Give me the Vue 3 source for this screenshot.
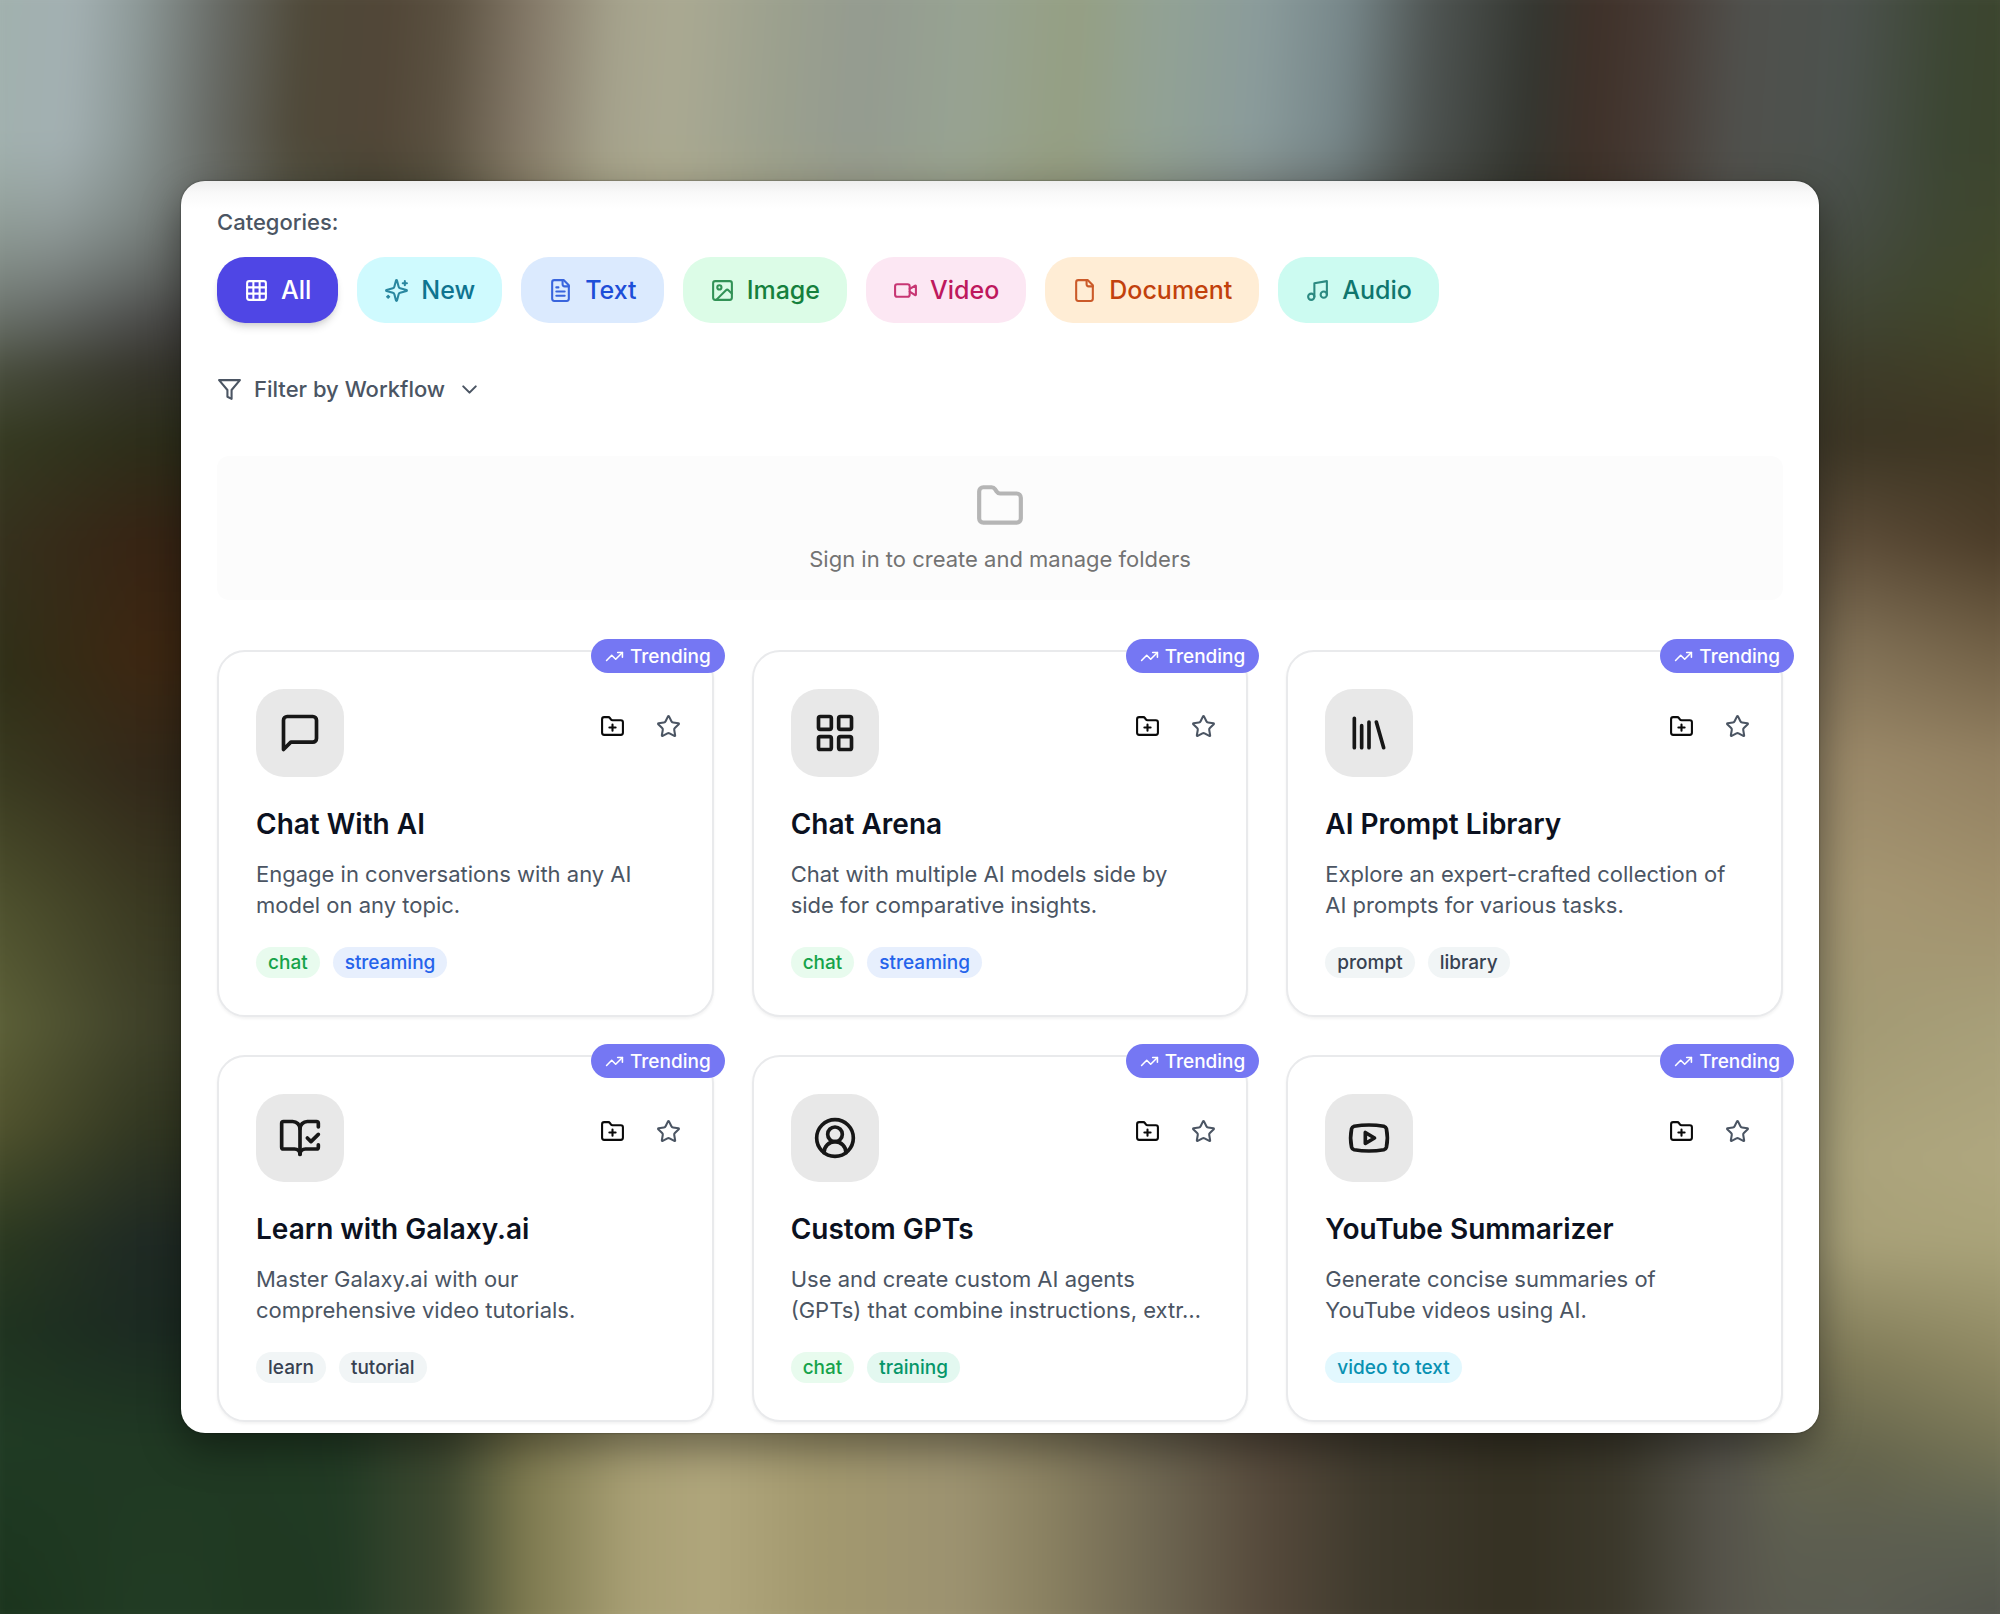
<script setup>
import { ref } from 'vue'

const icons = {
  grid: '<rect width="18" height="18" x="3" y="3" rx="2"/><path d="M3 9h18M3 15h18M9 3v18M15 3v18"/>',
  sparkles: '<path d="M9.937 15.5A2 2 0 0 0 8.5 14.063l-6.135-1.582a.5.5 0 0 1 0-.962L8.5 9.936A2 2 0 0 0 9.937 8.5l1.582-6.135a.5.5 0 0 1 .963 0L14.063 8.5A2 2 0 0 0 15.5 9.937l6.135 1.581a.5.5 0 0 1 0 .964L15.5 14.063a2 2 0 0 0-1.437 1.437l-1.582 6.135a.5.5 0 0 1-.963 0z"/><path d="M20 3v4M22 5h-4M4 17v2M5 18H3"/>',
  text: '<path d="M15 2H6a2 2 0 0 0-2 2v16a2 2 0 0 0 2 2h12a2 2 0 0 0 2-2V7Z"/><path d="M14 2v4a2 2 0 0 0 2 2h4M10 9H8M16 13H8M16 17H8"/>',
  image: '<rect width="18" height="18" x="3" y="3" rx="2"/><circle cx="9" cy="9" r="2"/><path d="m21 15-3.086-3.086a2 2 0 0 0-2.828 0L6 21"/>',
  video: '<path d="m16 13 5.223 3.482a.5.5 0 0 0 .777-.416V7.87a.5.5 0 0 0-.752-.432L16 10.5"/><rect x="2" y="6" width="14" height="12" rx="2"/>',
  file: '<path d="M15 2H6a2 2 0 0 0-2 2v16a2 2 0 0 0 2 2h12a2 2 0 0 0 2-2V7Z"/><path d="M14 2v4a2 2 0 0 0 2 2h4"/>',
  music: '<path d="M9 18V5l12-2v13"/><circle cx="6" cy="18" r="3"/><circle cx="18" cy="16" r="3"/>',
  funnel: '<path d="M22 3H2l8 9.46V19l4 2v-8.54z"/>',
  chevron: '<path d="m6 9 6 6 6-6"/>',
  folder: '<path d="M20 20a2 2 0 0 0 2-2V8a2 2 0 0 0-2-2h-7.9a2 2 0 0 1-1.69-.9L9.6 3.9A2 2 0 0 0 7.93 3H4a2 2 0 0 0-2 2v13a2 2 0 0 0 2 2Z"/>',
  folderPlus: '<path d="M12 10v6M9 13h6"/><path d="M20 20a2 2 0 0 0 2-2V8a2 2 0 0 0-2-2h-7.9a2 2 0 0 1-1.69-.9L9.6 3.9A2 2 0 0 0 7.93 3H4a2 2 0 0 0-2 2v13a2 2 0 0 0 2 2Z"/>',
  star: '<path d="M11.525 2.295a.53.53 0 0 1 .95 0l2.31 4.679a2.123 2.123 0 0 0 1.595 1.16l5.166.756a.53.53 0 0 1 .294.904l-3.736 3.638a2.123 2.123 0 0 0-.611 1.878l.882 5.14a.53.53 0 0 1-.771.56l-4.618-2.428a2.122 2.122 0 0 0-1.973 0L6.396 21.01a.53.53 0 0 1-.77-.56l.881-5.139a2.122 2.122 0 0 0-.611-1.879L2.16 9.795a.53.53 0 0 1 .294-.906l5.165-.755a2.122 2.122 0 0 0 1.597-1.16z"/>',
  trending: '<path d="m22 7-8.5 8.5-5-5L2 17"/><path d="M16 7h6v6"/>',
  message: '<path d="M21 15a2 2 0 0 1-2 2H7l-4 4V5a2 2 0 0 1 2-2h14a2 2 0 0 1 2 2z"/>',
  layout: '<rect width="7" height="7" x="3" y="3" rx="1"/><rect width="7" height="7" x="14" y="3" rx="1"/><rect width="7" height="7" x="14" y="14" rx="1"/><rect width="7" height="7" x="3" y="14" rx="1"/>',
  library: '<path d="m16 6 4 14M12 6v14M8 8v12M4 4v16"/>',
  bookCheck: '<path d="M12 21V7M16 12l2 2 4-4"/><path d="M22 6V4a1 1 0 0 0-1-1h-5a4 4 0 0 0-4 4 4 4 0 0 0-4-4H3a1 1 0 0 0-1 1v13a1 1 0 0 0 1 1h6a3 3 0 0 1 3 3 3 3 0 0 1 3-3h6a1 1 0 0 0 1-1v-1.3"/>',
  user: '<path d="M18 20a6 6 0 0 0-12 0"/><circle cx="12" cy="10" r="4"/><circle cx="12" cy="12" r="10"/>',
  youtube: '<path d="M2.5 17a24.12 24.12 0 0 1 0-10 2 2 0 0 1 1.4-1.4 49.56 49.56 0 0 1 16.2 0A2 2 0 0 1 21.5 7a24.12 24.12 0 0 1 0 10 2 2 0 0 1-1.4 1.4 49.55 49.55 0 0 1-16.2 0A2 2 0 0 1 2.5 17"/><path d="m10 15 5-3-5-3z"/>',
}

const categories = [
  { name: 'All', icon: 'grid' },
  { name: 'New', icon: 'sparkles' },
  { name: 'Text', icon: 'text' },
  { name: 'Image', icon: 'image' },
  { name: 'Video', icon: 'video' },
  { name: 'Document', icon: 'file' },
  { name: 'Audio', icon: 'music' },
]
const active = ref('All')

const tools = [
  { title: 'Chat With AI', icon: 'message', text: 'Engage in conversations with any AI model on any topic.', tags: [['chat', 'green'], ['streaming', 'blue']] },
  { title: 'Chat Arena', icon: 'layout', text: 'Chat with multiple AI models side by side for comparative insights.', tags: [['chat', 'green'], ['streaming', 'blue']] },
  { title: 'AI Prompt Library', icon: 'library', text: 'Explore an expert-crafted collection of AI prompts for various tasks.', tags: [['prompt', 'gray'], ['library', 'gray']] },
  { title: 'Learn with Galaxy.ai', icon: 'bookCheck', text: 'Master Galaxy.ai with our comprehensive video tutorials.', tags: [['learn', 'gray'], ['tutorial', 'gray']] },
  { title: 'Custom GPTs', icon: 'user', text: 'Use and create custom AI agents (GPTs) that combine instructions, extr…', tags: [['chat', 'green'], ['training', 'emerald']] },
  { title: 'YouTube Summarizer', icon: 'youtube', text: 'Generate concise summaries of YouTube videos using AI.', tags: [['video to text', 'cyan']] },
]
</script>

<template>
  <div class="page">
    <div class="backdrop" aria-hidden="true">
      <div class="wash bottom"></div>
      <div class="wash left"></div>
      <div class="wash left-inner"></div>
      <div class="wash right"></div>
      <div class="wash right-inner"></div>
      <div class="wash top"></div>
    </div>

    <main class="panel">
      <section class="categories">
        <h2 class="label">Categories:</h2>
        <div class="pills">
          <button
            v-for="c in categories"
            :key="c.name"
            type="button"
            class="pill"
            :class="[c.name.toLowerCase(), { active: active === c.name }]"
            @click="active = c.name"
          >
            <svg class="icon" viewBox="0 0 24 24" v-html="icons[c.icon]"></svg>
            <span>{{ c.name }}</span>
          </button>
        </div>
      </section>

      <button type="button" class="filter">
        <svg class="icon" viewBox="0 0 24 24" v-html="icons.funnel"></svg>
        <span>Filter by Workflow</span>
        <svg class="icon" viewBox="0 0 24 24" v-html="icons.chevron"></svg>
      </button>

      <section class="folders">
        <svg class="icon" viewBox="0 0 24 24" v-html="icons.folder"></svg>
        <p>Sign in to create and manage folders</p>
      </section>

      <section class="cards">
        <article v-for="t in tools" :key="t.title" class="card">
          <span class="badge">
            <svg class="icon" viewBox="0 0 24 24" v-html="icons.trending"></svg>
            <span>Trending</span>
          </span>
          <header class="card-head">
            <div class="tile">
              <svg class="icon" viewBox="0 0 24 24" v-html="icons[t.icon]"></svg>
            </div>
            <div class="actions">
              <button type="button" class="action" aria-label="Add to folder">
                <svg class="icon" viewBox="0 0 24 24" v-html="icons.folderPlus"></svg>
              </button>
              <button type="button" class="action favorite" aria-label="Favorite">
                <svg class="icon" viewBox="0 0 24 24" v-html="icons.star"></svg>
              </button>
            </div>
          </header>
          <h3 class="title">{{ t.title }}</h3>
          <p class="summary">{{ t.text }}</p>
          <div class="tags">
            <span v-for="[name, tone] in t.tags" :key="name" class="tag" :class="tone">{{ name }}</span>
          </div>
        </article>
      </section>
    </main>
  </div>
</template>

<style>
body {
  margin: 0;
}
</style>

<style scoped>
.page {
  position: relative;
  box-sizing: border-box;
  min-height: 100vh;
  padding: 181px;
  overflow: hidden;
  font-family: Inter, "Liberation Sans", sans-serif;
}

/* Soft colour washes behind the panel */
.backdrop {
  position: absolute;
  inset: -28px;
  filter: blur(14px);
}
.wash {
  position: absolute;
  inset: 0;
}
.wash.bottom {
  background: linear-gradient(90deg, #1d3721 0%, #223c24 10%, #243c26 18%, #3e4830 23%, #7e7a50 27%, #a89f74 32%, #b0a67c 36%, #a3996f 41%, #9c9270 48%, #8b8262 52%, #6c6450 58%, #55493b 63%, #3f3a2d 68%, #353123 75%, #3b382b 80%, #55534a 85%, #605f52 89%, #5a5e50 94%, #50524b 100%);
}
.wash.left {
  right: auto;
  width: 20%;
  background: linear-gradient(180deg, #9fb0ae 0%, #808a7e 12%, #5e635b 20%, #363b22 28%, #36321e 34%, #2f3018 42%, #3a3b20 48%, #50532f 56%, #5e6239 63%, #53552f 69%, #2c3a20 76%, #203420 81%, #203b24 88%, #1a331c 100%);
  mask-image: linear-gradient(90deg, #000 50%, transparent);
}
.wash.left-inner {
  right: auto;
  width: 18%;
  background: linear-gradient(180deg, #a0aaaa 0%, #6c726e 14%, #3c3a38 21%, #2d2e1a 28%, #372414 34%, #3d2712 41%, #33291a 48%, #3b3a22 56%, #40422a 63%, #333822 69%, #1f2a24 76%, #1c2a22 81%, #203923 88%, #223c24 100%);
  mask-image: linear-gradient(90deg, transparent 5%, #000 45%, #000 60%, transparent);
}
.wash.right {
  left: auto;
  width: 14%;
  background: linear-gradient(180deg, #3a4332 0%, #474c30 12%, #474c28 19%, #3f3722 28%, #4a3b27 34%, #6d5c42 40%, #917f60 47%, #a0906c 55%, #a8a07a 63%, #b0a880 71%, #aaa47a 76%, #908a64 83%, #7a7858 88%, #5e6352 93%, #50514c 100%);
  mask-image: linear-gradient(270deg, #000 50%, transparent);
}
.wash.right-inner {
  left: auto;
  width: 14%;
  background: linear-gradient(180deg, #4b504b 0%, #454b45 12%, #3f4430 19%, #3c3524 28%, #5c4c38 34%, #7e6e54 40%, #9a8868 47%, #a59672 55%, #a39a74 63%, #aba37b 71%, #a8a078 76%, #807b58 83%, #64644c 89%, #5d5e50 94%, #5a5c52 100%);
  mask-image: linear-gradient(270deg, transparent 5%, #000 60%, transparent);
}
.wash.top {
  bottom: auto;
  height: 26%;
  background: linear-gradient(94deg, #a0b1ac 0%, #a3b0b2 5%, #8e9a99 8%, #676a65 12%, #4f4939 16%, #514637 20%, #5b5141 23%, #857a69 27%, #a5a28c 31%, #aaa992 34%, #9ba08e 39%, #949b90 43%, #97a392 48%, #959f83 53%, #92a294 57%, #8a9b9b 62%, #77878a 66%, #4f5553 70%, #343630 75%, #3f3129 78%, #463a34 81%, #50504c 85%, #4c524e 90%, #3c4633 95%, #3b4429 100%);
  mask-image: linear-gradient(#000 38%, transparent 92%);
}

.panel {
  position: relative;
  padding: 26px 36px 11px;
  overflow: hidden;
  border-radius: 24px;
  background: linear-gradient(#eeeeee 0, #f9f9f9 12px, #ffffff 28px);
  box-shadow: 0 0 2px rgba(0, 0, 0, 0.5), 0 16px 40px rgba(0, 0, 0, 0.4);
}

.icon {
  display: block;
  flex: none;
  width: 25px;
  height: 25px;
  fill: none;
  stroke: currentColor;
  stroke-width: 2;
  stroke-linecap: round;
  stroke-linejoin: round;
}
button {
  margin: 0;
  padding: 0;
  border: 0;
  background: none;
  color: inherit;
  font-family: inherit;
  cursor: pointer;
}

.label {
  margin: 0 0 19px;
  color: #4b5563;
  font-size: 22px;
  font-weight: 500;
  line-height: 31px;
}
.pills {
  display: flex;
  flex-wrap: wrap;
  gap: 19px;
}
.pill {
  display: flex;
  align-items: center;
  gap: 12px;
  height: 66px;
  padding: 0 27px;
  border-radius: 28px;
  font-size: 25px;
  font-weight: 500;
}
.pill .icon {
  opacity: 0.85;
}
.new { background: #cffafe; color: #0e7490; }
.text { background: #dbeafe; color: #1d4ed8; }
.image { background: #dcfce7; color: #15803d; }
.video { background: #fce7f3; color: #be185d; }
.document { background: #ffedd5; color: #c2410c; }
.audio { background: #ccfbf1; color: #0f766e; }
.pill.active {
  background: #4f46e5;
  color: #ffffff;
  box-shadow: 0 6px 9px -2px rgba(0, 0, 0, 0.14), 0 3px 6px -3px rgba(0, 0, 0, 0.12);
}
.pill.active .icon {
  opacity: 1;
}

.filter {
  display: flex;
  align-items: center;
  gap: 12px;
  margin-top: 51px;
  color: #4b5563;
  font-size: 22px;
  font-weight: 500;
  line-height: 31px;
}

.folders {
  display: flex;
  flex-direction: column;
  align-items: center;
  gap: 13px;
  margin-top: 51px;
  padding: 25px;
  border-radius: 12px;
  background: #fcfcfc;
  color: #737373;
  font-size: 22px;
  line-height: 31px;
}
.folders .icon {
  width: 50px;
  height: 50px;
  color: #b5b5b5;
}
.folders p {
  margin: 0;
}

.cards {
  display: grid;
  grid-template-columns: repeat(3, minmax(0, 1fr));
  gap: 38px;
  margin-top: 50px;
}
.card {
  position: relative;
  padding: 37px;
  border: 2px solid #e9eaec;
  border-radius: 28px;
  background: #ffffff;
  box-shadow: 0 2px 3px rgba(0, 0, 0, 0.05);
}
.badge {
  position: absolute;
  top: -13px;
  right: -13px;
  display: flex;
  align-items: center;
  gap: 6px;
  height: 34px;
  padding: 0 14px;
  border-radius: 17px;
  background: #7577f3;
  color: #ffffff;
  font-size: 19px;
  font-weight: 500;
}
.badge .icon {
  width: 19px;
  height: 19px;
}
.card-head {
  display: flex;
  align-items: flex-start;
  justify-content: space-between;
}
.tile {
  display: flex;
  align-items: center;
  justify-content: center;
  width: 88px;
  height: 88px;
  border-radius: 28px;
  background: #e8e8e8;
  color: #171717;
}
.tile .icon {
  width: 44px;
  height: 44px;
}
.actions {
  display: flex;
  margin: 9px -22px 0 0;
}
.action {
  display: flex;
  align-items: center;
  justify-content: center;
  width: 56px;
  height: 56px;
  color: #0a0a0a;
}
.favorite {
  color: #4b5563;
}
.title {
  margin: 25px 0 13px;
  color: #0b1120;
  font-size: 28px;
  font-weight: 600;
  line-height: 44px;
}
.summary {
  margin: 0;
  color: #4b5563;
  font-size: 22px;
  line-height: 31px;
}
.tags {
  display: flex;
  gap: 13px;
  margin-top: 26px;
}
.tag {
  padding: 0 12px;
  border-radius: 16px;
  font-size: 19px;
  font-weight: 500;
  line-height: 31px;
}
.green { background: #e8fbee; color: #16a34a; }
.blue { background: #e7effd; color: #2563eb; }
.gray { background: #f1f5f6; color: #374151; }
.emerald { background: #e3f8f0; color: #059669; }
.cyan { background: #e2f8fe; color: #0891b2; }
</style>
